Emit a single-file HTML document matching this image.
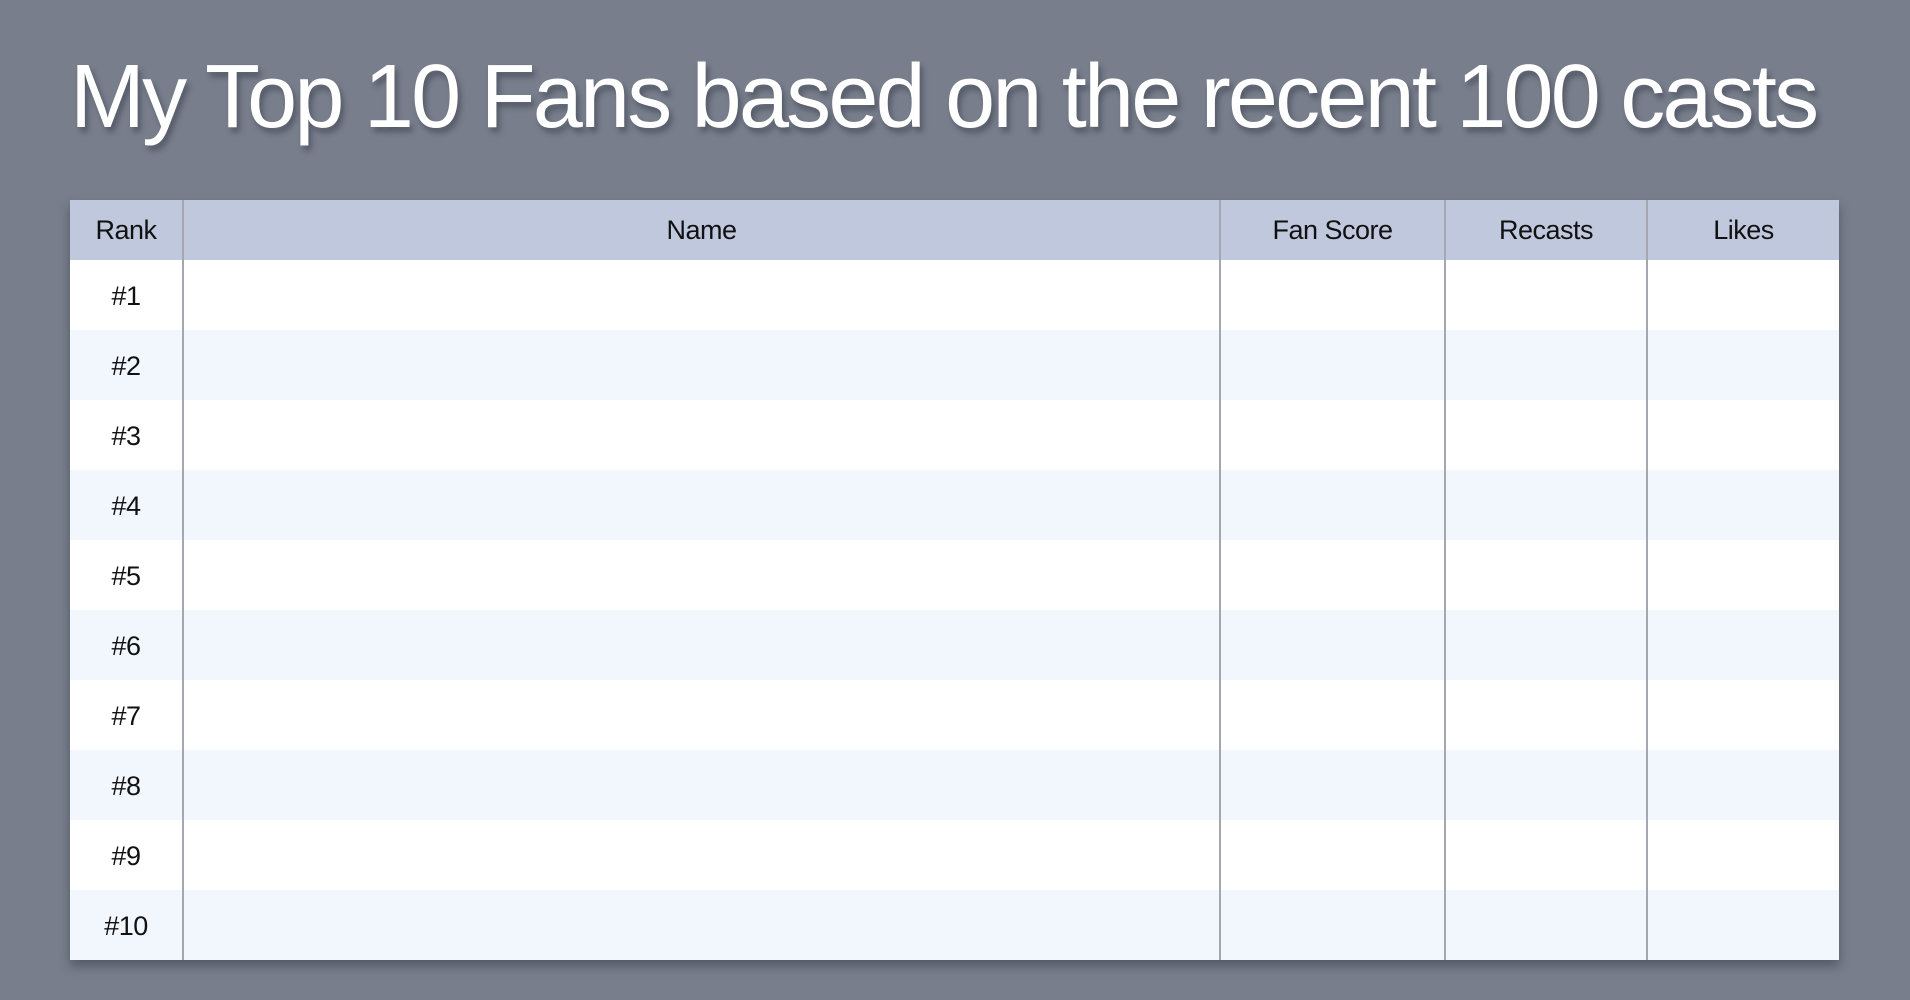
<!DOCTYPE html>
<html><head><meta charset="utf-8"><style>
html,body{margin:0;padding:0;}
body{width:1910px;height:1000px;background:#787e8b;position:relative;overflow:hidden;font-family:"Liberation Sans",sans-serif;}
h1{position:absolute;left:70px;top:37px;margin:0;font-weight:400;font-size:90px;color:#fff;letter-spacing:-2.8px;white-space:nowrap;text-shadow:3px 5px 6px rgba(40,45,60,0.45);line-height:120px;}
table{position:absolute;left:70px;top:200px;width:1769px;height:760px;border-collapse:collapse;box-shadow:0 6px 10px rgba(40,45,60,0.45);table-layout:fixed;}
th,td{text-align:center;font-size:27px;color:#111;letter-spacing:-0.5px;padding:0;border-left:2px solid #a3a7b0;}
th:first-child,td:first-child{border-left:none;}
th{background:#bfc8dc;height:60px;font-weight:400;}
td{height:68px;padding-top:2px;}
tr:nth-child(odd) td{background:#fff;}
tr:nth-child(even) td{background:#f2f6fd;}
</style></head><body>
<h1>My Top 10 Fans based on the recent 100 casts</h1>
<table>
<colgroup><col style="width:113px"><col style="width:1037px"><col style="width:225px"><col style="width:202px"><col style="width:192px"></colgroup>
<thead><tr><th>Rank</th><th>Name</th><th>Fan Score</th><th>Recasts</th><th>Likes</th></tr></thead>
<tbody>
<tr><td>#1</td><td></td><td></td><td></td><td></td></tr>
<tr><td>#2</td><td></td><td></td><td></td><td></td></tr>
<tr><td>#3</td><td></td><td></td><td></td><td></td></tr>
<tr><td>#4</td><td></td><td></td><td></td><td></td></tr>
<tr><td>#5</td><td></td><td></td><td></td><td></td></tr>
<tr><td>#6</td><td></td><td></td><td></td><td></td></tr>
<tr><td>#7</td><td></td><td></td><td></td><td></td></tr>
<tr><td>#8</td><td></td><td></td><td></td><td></td></tr>
<tr><td>#9</td><td></td><td></td><td></td><td></td></tr>
<tr><td>#10</td><td></td><td></td><td></td><td></td></tr>
</tbody></table>
</body></html>
